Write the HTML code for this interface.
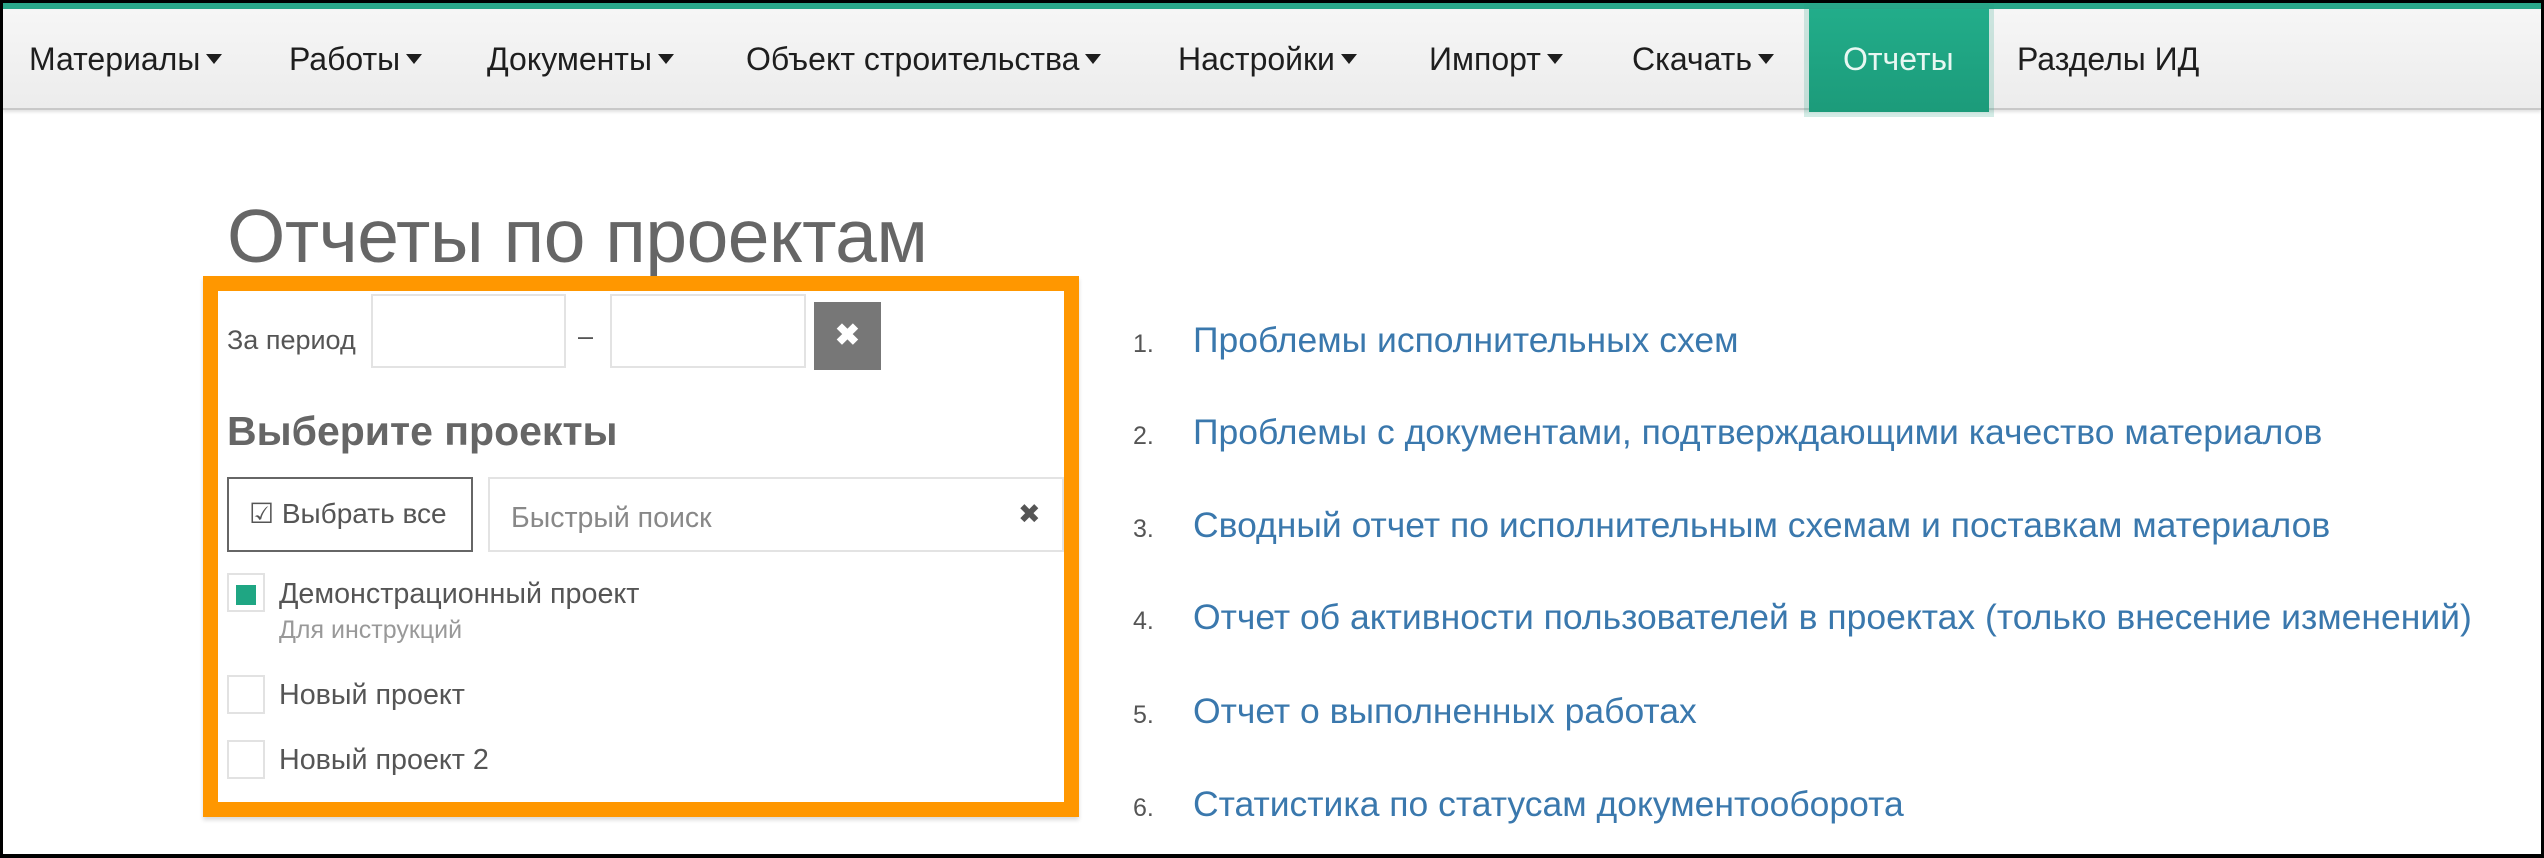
<!DOCTYPE html>
<html><head><meta charset="utf-8"><style>
*{box-sizing:border-box;margin:0;padding:0}
body{width:2544px;height:858px;background:#000;overflow:hidden;font-family:"Liberation Sans",Arial,sans-serif;position:relative}
.page{position:absolute;left:3px;top:3px;right:3px;bottom:4px;background:#fff;overflow:hidden}
.green{position:absolute;left:0;right:0;top:0;height:6px;background:#2aa88a}
.nav{position:absolute;left:0;right:0;top:6px;height:101px;background:linear-gradient(#f6f6f6,#ececec);border-bottom:2px solid #c8c8c8;box-shadow:0 2px 3px rgba(0,0,0,.12)}
.nav span{position:absolute;top:32px;font-size:32px;color:#1e1e1e;white-space:nowrap}
.caret{display:inline-block;width:0;height:0;border-left:8px solid transparent;border-right:8px solid transparent;border-top:10px solid #1e1e1e;vertical-align:middle;margin-left:6px;position:relative;top:-3px}
.active{position:absolute;left:1806px;top:6px;width:180px;height:103px;background:linear-gradient(#22ad8a,#1c9b7a);box-shadow:0 0 0 5px rgba(34,160,130,.2)}
.nav span.act{color:#e8f7f2}
h1{position:absolute;left:224px;top:190px;font-size:75px;font-weight:normal;color:#666;letter-spacing:-0.5px}
.box{position:absolute;left:200px;top:273px;width:876px;height:541px;border:15px solid #ff9700;box-shadow:0 3px 4px rgba(0,0,0,.15)}
.t{position:absolute;white-space:nowrap}
.inp{position:absolute;border:2px solid #e3e3e3;background:#fff}
.li{position:absolute;left:1130px;white-space:nowrap}
.li b{font-weight:normal;font-size:25px;color:#555;display:inline-block;width:60px}
.li a{font-size:35.5px;color:#3a78ad;text-decoration:none}
.cb{position:absolute;width:38px;height:39px;border:2px solid #e2e2e2;background:#fff}
</style></head><body><div class="page">
<div class="green"></div>
<div class="nav">
<span style="left:26px">Материалы<i class="caret"></i></span>
<span style="left:286px">Работы<i class="caret"></i></span>
<span style="left:484px">Документы<i class="caret"></i></span>
<span style="left:743px">Объект строительства<i class="caret"></i></span>
<span style="left:1175px">Настройки<i class="caret"></i></span>
<span style="left:1426px">Импорт<i class="caret"></i></span>
<span style="left:1629px">Скачать<i class="caret"></i></span>
</div>
<div class="active"></div>
<div class="nav" style="background:none;border:none;box-shadow:none">
<span class="act" style="left:1840px">Отчеты</span>
<span style="left:2014px">Разделы ИД</span>
</div>
<h1>Отчеты по проектам</h1>
<div class="box"></div>
<div class="t" style="left:224px;top:322px;font-size:27px;color:#555">За период</div>
<div class="inp" style="left:368px;top:291px;width:195px;height:74px"></div>
<div class="t" style="left:575px;top:318px;font-size:27px;color:#555">–</div>
<div class="inp" style="left:607px;top:291px;width:196px;height:74px"></div>
<div style="position:absolute;left:811px;top:299px;width:67px;height:68px;background:#777;color:#fff;font-size:30px;font-weight:bold;text-align:center;line-height:68px">✖</div>
<div class="t" style="left:224px;top:405px;font-size:41px;font-weight:bold;color:#666">Выберите проекты</div>
<div style="position:absolute;left:224px;top:474px;width:246px;height:75px;border:2px solid #666;background:#fff"></div>
<div class="t" style="left:246px;top:494px;font-size:28px;color:#555">☑ Выбрать все</div>
<div class="inp" style="left:485px;top:474px;width:576px;height:75px"></div>
<div class="t" style="left:508px;top:499px;font-size:28.5px;color:#888">Быстрый поиск</div>
<div class="t" style="left:1015px;top:496px;font-size:27px;color:#555">✖</div>
<div class="cb" style="left:224px;top:570px"><div style="position:absolute;left:7px;top:10px;width:20px;height:20px;background:#1fa683"></div></div>
<div class="t" style="left:276px;top:575px;font-size:28.7px;color:#555">Демонстрационный проект</div>
<div class="t" style="left:276px;top:613px;font-size:25px;color:#999">Для инструкций</div>
<div class="cb" style="left:224px;top:672px"></div>
<div class="t" style="left:276px;top:676px;font-size:28.7px;color:#555">Новый проект</div>
<div class="cb" style="left:224px;top:737px"></div>
<div class="t" style="left:276px;top:741px;font-size:28.7px;color:#555">Новый проект 2</div>
<div class="li" style="top:317px"><b>1.</b><a>Проблемы исполнительных схем</a></div>
<div class="li" style="top:409px"><b>2.</b><a>Проблемы с документами, подтверждающими качество материалов</a></div>
<div class="li" style="top:502px"><b>3.</b><a>Сводный отчет по исполнительным схемам и поставкам материалов</a></div>
<div class="li" style="top:594px"><b>4.</b><a>Отчет об активности пользователей в проектах (только внесение изменений)</a></div>
<div class="li" style="top:688px"><b>5.</b><a>Отчет о выполненных работах</a></div>
<div class="li" style="top:781px"><b>6.</b><a>Статистика по статусам документооборота</a></div>
</div></body></html>
